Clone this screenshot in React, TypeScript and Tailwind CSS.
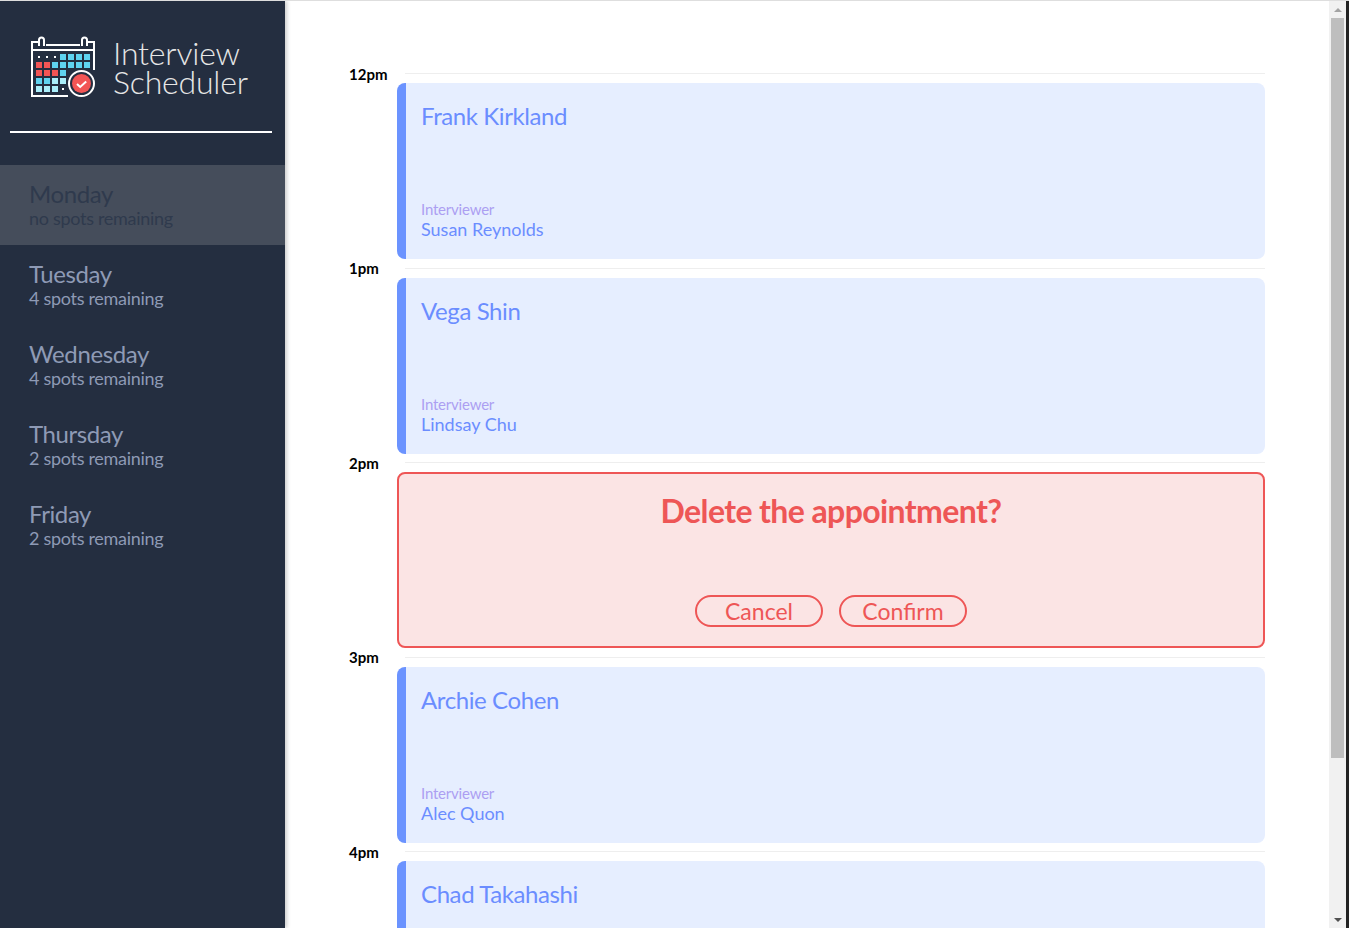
const days = [
  { name: 'Monday', spots: 'no spots remaining', selected: true },
  { name: 'Tuesday', spots: '4 spots remaining' },
  { name: 'Wednesday', spots: '4 spots remaining' },
  { name: 'Thursday', spots: '2 spots remaining' },
  { name: 'Friday', spots: '2 spots remaining' },
];

const appointments = [
  { time: '12pm', student: 'Frank Kirkland', interviewer: 'Susan Reynolds' },
  { time: '1pm', student: 'Vega Shin', interviewer: 'Lindsay Chu' },
  { time: '2pm', confirm: true },
  { time: '3pm', student: 'Archie Cohen', interviewer: 'Alec Quon' },
  { time: '4pm', student: 'Chad Takahashi', interviewer: 'Michael Chan' },
];

const cyan = '#5fd3f0';
const pale = '#aaeefa';
const red = '#f25555';
const cells: [number, number, string][] = [
  [3, 0, cyan], [4, 0, cyan], [5, 0, cyan], [6, 0, cyan],
  [0, 1, red], [1, 1, red], [2, 1, cyan], [3, 1, cyan], [4, 1, cyan], [5, 1, cyan], [6, 1, cyan],
  [0, 2, red], [1, 2, red], [2, 2, red], [3, 2, cyan],
  [0, 3, cyan], [1, 3, cyan], [2, 3, pale], [3, 3, pale],
  [0, 4, pale], [1, 4, pale], [2, 4, pale],
];

function Logo() {
  return (
    <svg width="66" height="62" viewBox="30 36 66 62" className="shrink-0">
      <g fill="none" stroke="#fff" strokeWidth="2">
        <path d="M38 42H32V96H68M88 42H94V70M32 50H94M46 45H80" />
        <path d="M39 46V40a2.5 2.5 0 0 1 5 0V46M82 46V40a2.5 2.5 0 0 1 5 0V46" />
      </g>
      {cells.map(([col, row, color]) => (
        <rect key={`${col}-${row}`} x={36 + col * 8} y={54 + row * 8} width="6" height="6" fill={color} />
      ))}
      <g fill="#fff">
        <rect x="38" y="56" width="2" height="2" />
        <rect x="46" y="56" width="2" height="2" />
        <rect x="54" y="56" width="2" height="2" />
        <rect x="62" y="88" width="2" height="2" />
      </g>
      <circle cx="81.5" cy="83.5" r="12.5" fill="#242e40" stroke="#fff" strokeWidth="2" />
      <circle cx="81.5" cy="83.5" r="9.5" fill={red} />
      <path d="M77 84l3.2 3 6-5.5" fill="none" stroke="#fff" strokeWidth="2" />
    </svg>
  );
}

function Sidebar() {
  return (
    <aside className="relative z-10 flex h-full w-[285px] shrink-0 flex-col bg-[#242e40] shadow-[2px_0_4px_rgba(0,0,0,0.2)]">
      <div className="ml-[10px] mr-[13px] flex h-[132px] items-start gap-[17px] border-b-2 border-white pl-[20px] pt-[35px]">
        <Logo />
        <div className="pt-[2px] text-[32px] font-light leading-[29px] tracking-[-0.2px] text-[#e6e6e6]">
          Interview
          <br />
          Scheduler
        </div>
      </div>
      <ul className="mt-[32px]">
        {days.map((day) => (
          <li
            key={day.name}
            className={`h-[80px] pl-[29px] pt-[14px] ${day.selected ? 'bg-[#454d5b] text-[#2f3a4d]' : 'text-[#8e9ab5]'}`}
          >
            <div className="text-[24px] leading-[29px] tracking-[-0.4px]">{day.name}</div>
            <div className="text-[18px] leading-[20px] tracking-[-0.3px]">{day.spots}</div>
          </li>
        ))}
      </ul>
    </aside>
  );
}

function Booked({ student, interviewer }: { student: string; interviewer: string }) {
  return (
    <div className="flex h-[176px] flex-col rounded-lg border-l-[9px] border-[#6b93ff] bg-[#e6eeff] px-[15px] pb-[20px] pt-[18px] text-[#6b8dff]">
      <div className="text-[24px] leading-[30px] tracking-[-0.4px]">{student}</div>
      <div className="mt-auto text-[15px] leading-[20px] tracking-[-0.2px] text-[#ac9ff2]">Interviewer</div>
      <div className="text-[18px] leading-[20px]">{interviewer}</div>
    </div>
  );
}

function ConfirmDelete() {
  return (
    <div className="flex h-[176px] flex-col items-center rounded-lg border-2 border-[#ee5656] bg-[#fbe4e4] pb-[19px] pt-[17px] text-[#ee5656]">
      <div className="text-[32px] font-bold leading-[40px] tracking-[-0.6px]">Delete the appointment?</div>
      <div className="mt-auto flex gap-[16px]">
        <button className="h-[32px] w-[128px] rounded-full border-2 border-[#ee5656] text-[23px] leading-none">Cancel</button>
        <button className="h-[32px] w-[128px] rounded-full border-2 border-[#ee5656] text-[23px] leading-none">Confirm</button>
      </div>
    </div>
  );
}

function Scrollbar() {
  return (
    <div className="flex h-full w-[17px] shrink-0 flex-col items-center bg-[#f1f1f1]">
      <div className="flex h-[17px] items-center justify-center">
        <div className="h-0 w-0 border-x-[4px] border-b-[4px] border-x-transparent border-b-[#a3a3a3]" />
      </div>
      <div className="h-[740px] w-[13px] bg-[#bebebe]" />
      <div className="mt-auto flex h-[17px] items-center justify-center">
        <div className="h-0 w-0 border-x-[4px] border-t-[4px] border-x-transparent border-t-[#505050]" />
      </div>
    </div>
  );
}

export default function App() {
  return (
    <div className="flex h-screen overflow-hidden border-t border-[#dedede] bg-white font-[Lato,sans-serif]">
      <Sidebar />
      <main className="min-w-0 flex-1 overflow-hidden pl-[64px] pr-[64px] pt-[72.4px]">
        {appointments.map((a) => (
          <section key={a.time} className="flex h-[194.4px]">
            <div className="-mt-[9.4px] w-[48px] shrink-0 text-[15px] font-bold leading-[20px] text-black">{a.time}</div>
            <div className="min-w-0 flex-1">
              <div className="ml-[8px] h-px bg-[#eeeeee]" />
              <div className="mt-[9px]">
                {a.confirm ? <ConfirmDelete /> : <Booked student={a.student!} interviewer={a.interviewer!} />}
              </div>
            </div>
          </section>
        ))}
      </main>
      <Scrollbar />
      <div className="h-full w-[3px] shrink-0 bg-[#222222]" />
    </div>
  );
}
